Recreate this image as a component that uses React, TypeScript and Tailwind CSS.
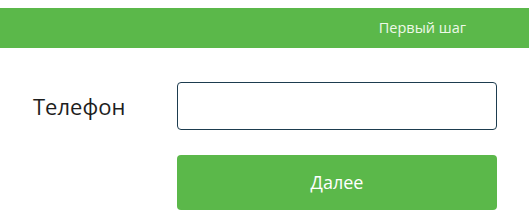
export default function App() {
  return (
    <div className="min-h-[220px] bg-white pt-2 font-['Open_Sans',sans-serif]">
      <div className="flex h-10 items-center justify-end bg-[#5bb84a] pr-[63px]">
        <span className="text-[14.5px] text-[#eef8e8]">Первый шаг</span>
      </div>
      <div className="mt-[34px] grid grid-cols-[177px_320px] items-center gap-y-[25px]">
        <label className="pl-[33px] text-[22px] text-[#1e1e1e]">Телефон</label>
        <input
          type="text"
          className="h-12 w-[320px] rounded-[4px] border border-[#1d3c4f] bg-white px-3 outline-none"
        />
        <div />
        <button className="h-[55px] w-[320px] rounded-[4px] bg-[#5bb84a] text-[18px] text-white">
          Далее
        </button>
      </div>
    </div>
  );
}
